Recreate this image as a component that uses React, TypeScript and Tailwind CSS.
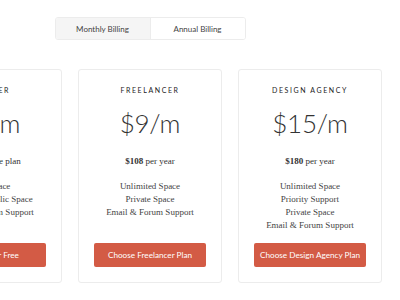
import React, { useState } from 'react';

type Plan = {
  name: string;
  price: string;
  note: React.ReactNode;
  features: string[];
  cta: string;
};

const plans: Plan[] = [
  {
    name: 'Starter',
    price: '$0/m',
    note: 'Always free plan',
    features: ['1GB Space', 'Unlimited Public Space', 'Email & Forum Support'],
    cta: 'Sign Up for Free',
  },
  {
    name: 'Freelancer',
    price: '$9/m',
    note: (
      <>
        <b>$108</b> per year
      </>
    ),
    features: ['Unlimited Space', 'Private Space', 'Email & Forum Support'],
    cta: 'Choose Freelancer Plan',
  },
  {
    name: 'Design Agency',
    price: '$15/m',
    note: (
      <>
        <b>$180</b> per year
      </>
    ),
    features: ['Unlimited Space', 'Priority Support', 'Private Space', 'Email & Forum Support'],
    cta: 'Choose Design Agency Plan',
  },
];

const sans = "font-['Lato','Open_Sans',sans-serif]";
const serif = "font-['Liberation_Serif','DejaVu_Serif',serif]";

export default function App() {
  const [billing, setBilling] = useState<'monthly' | 'annual'>('monthly');

  return (
    <div className="w-[400px] h-[300px] overflow-hidden bg-white">
      <div className="-ml-[82px] w-[464px] flex flex-col items-center pt-[17px]">
        {/* Billing toggle */}
        <div className={`flex h-[23px] w-[191px] rounded-[3px] border border-[#ececec] overflow-hidden ${sans} text-[8px] text-[#444]`}>
          <button
            onClick={() => setBilling('monthly')}
            className={`flex-1 border-r border-[#ececec] ${billing === 'monthly' ? 'bg-[#f5f5f5]' : 'bg-white'}`}
          >
            Monthly Billing
          </button>
          <button
            onClick={() => setBilling('annual')}
            className={`flex-1 ${billing === 'annual' ? 'bg-[#f5f5f5]' : 'bg-white'}`}
          >
            Annual Billing
          </button>
        </div>

        {/* Plans */}
        <div className="mt-[29px] flex gap-[16px]">
          {plans.map((plan) => (
            <div
              key={plan.name}
              className="w-[144px] h-[214px] rounded-[3px] border border-[#ececec] flex flex-col items-center px-[15px] pt-[15px] pb-[15px]"
            >
              <div className={`${sans} text-[7px] uppercase tracking-[1.6px] text-[#222] leading-[10px]`}>
                {plan.name}
              </div>
              <div className={`${sans} font-light text-[26px] leading-[32px] text-[#333] mt-[12px] tracking-[-0.3px]`}>
                {plan.price}
              </div>
              <div className={`${serif} text-[9px] text-[#333] mt-[16px] leading-[12px]`}>{plan.note}</div>
              <ul className={`${serif} text-[9px] text-[#444] text-center leading-[13px] mt-[13px]`}>
                {plan.features.map((f) => (
                  <li key={f}>{f}</li>
                ))}
              </ul>
              <button
                className={`mt-auto w-full h-[24px] rounded-[2px] bg-[#d35b45] text-white ${sans} text-[8.2px] whitespace-nowrap`}
              >
                {plan.cta}
              </button>
            </div>
          ))}
        </div>
      </div>
    </div>
  );
}
